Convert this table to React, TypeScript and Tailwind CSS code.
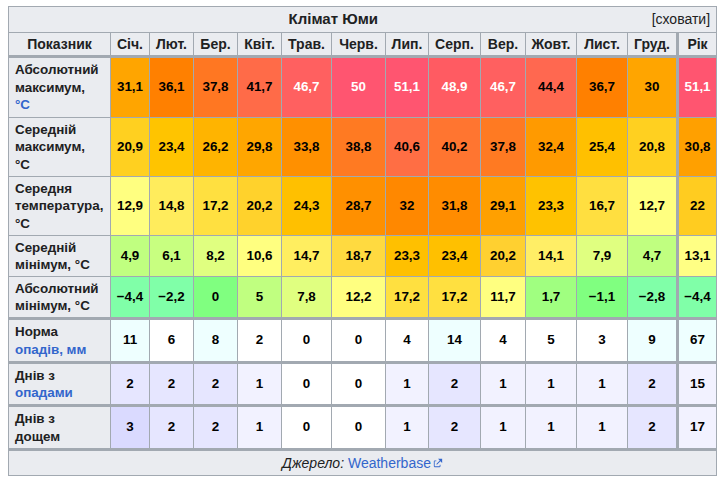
const months = ["Січ.", "Лют.", "Бер.", "Квіт.", "Трав.", "Черв.", "Лип.", "Серп.", "Вер.", "Жовт.", "Лист.", "Груд.", "Рік"]

// column widths, measured border to border
const widths = [102, 39, 44, 44, 44, 50, 54, 43, 52, 45, 51, 51, 50, 39]

type Cell = [string, string, boolean?]

const link = "text-[#3366cc]"

const rows: { label: React.ReactNode; h: string; sep?: boolean; cells: Cell[] }[] = [
  {
    label: (
      <>
        Абсолютний
        <br />
        максимум,
        <br />
        <span className={link}>°C</span>
      </>
    ),
    h: "h-[61px]",
    sep: true,
    cells: [
      ["31,1", "#ffa500"],
      ["36,1", "#ff8000"],
      ["37,8", "#ff7722"],
      ["41,7", "#ff6b48"],
      ["46,7", "#ff6060", true],
      ["50", "#ff5570", true],
      ["51,1", "#ff5570", true],
      ["48,9", "#ff5b62", true],
      ["46,7", "#ff6060", true],
      ["44,4", "#ff6850"],
      ["36,7", "#ff8000"],
      ["30", "#ffa500"],
      ["51,1", "#ff5570", true],
    ],
  },
  {
    label: (
      <>
        Середній
        <br />
        максимум,
        <br />
        °C
      </>
    ),
    h: "h-[59px]",
    cells: [
      ["20,9", "#ffd020"],
      ["23,4", "#ffc400"],
      ["26,2", "#ffb400"],
      ["29,8", "#ffa600"],
      ["33,8", "#ff9000"],
      ["38,8", "#ff7a22"],
      ["40,6", "#ff6e44"],
      ["40,2", "#ff7530"],
      ["37,8", "#ff7a22"],
      ["32,4", "#ff9a00"],
      ["25,4", "#ffc000"],
      ["20,8", "#ffd020"],
      ["30,8", "#ffa000"],
    ],
  },
  {
    label: (
      <>
        Середня
        <br />
        температура,
        <br />
        °C
      </>
    ),
    h: "h-[59px]",
    cells: [
      ["12,9", "#ffff80"],
      ["14,8", "#ffec5c"],
      ["17,2", "#ffe040"],
      ["20,2", "#ffd22c"],
      ["24,3", "#ffc000"],
      ["28,7", "#ff9000"],
      ["32", "#ff8800"],
      ["31,8", "#ff8c00"],
      ["29,1", "#ffa000"],
      ["23,3", "#ffc200"],
      ["16,7", "#ffdf40"],
      ["12,7", "#ffff80"],
      ["22", "#ffcc20"],
    ],
  },
  {
    label: (
      <>
        Середній
        <br />
        мінімум, °C
      </>
    ),
    h: "h-[41px]",
    cells: [
      ["4,9", "#c0ff80"],
      ["6,1", "#c8ff80"],
      ["8,2", "#e0ff80"],
      ["10,6", "#ffff80"],
      ["14,7", "#ffee60"],
      ["18,7", "#ffda40"],
      ["23,3", "#ffc000"],
      ["23,4", "#ffc000"],
      ["20,2", "#ffd030"],
      ["14,1", "#ffee66"],
      ["7,9", "#e0ff80"],
      ["4,7", "#c0ff80"],
      ["13,1", "#ffff84"],
    ],
  },
  {
    label: (
      <>
        Абсолютний
        <br />
        мінімум, °C
      </>
    ),
    h: "h-[42px]",
    cells: [
      ["−4,4", "#80ffa8"],
      ["−2,2", "#80ffa8"],
      ["0", "#80ff80"],
      ["5", "#c0ff80"],
      ["7,8", "#e0ff80"],
      ["12,2", "#ffff80"],
      ["17,2", "#ffe040"],
      ["17,2", "#ffe040"],
      ["11,7", "#ffff80"],
      ["1,7", "#a0ff80"],
      ["−1,1", "#80ff80"],
      ["−2,8", "#80ffa8"],
      ["−4,4", "#80ffa8"],
    ],
  },
  {
    label: (
      <>
        Норма
        <br />
        <span className={link}>опадів, мм</span>
      </>
    ),
    h: "h-[44px]",
    sep: true,
    cells: [
      ["11", "#eeffff"],
      ["6", "#ffffff"],
      ["8", "#eeffff"],
      ["2", "#ffffff"],
      ["0", "#ffffff"],
      ["0", "#ffffff"],
      ["4", "#ffffff"],
      ["14", "#eeffff"],
      ["4", "#ffffff"],
      ["5", "#ffffff"],
      ["3", "#ffffff"],
      ["9", "#eeffff"],
      ["67", "#eeffff"],
    ],
  },
  {
    label: (
      <>
        Днів з
        <br />
        <span className={link}>опадами</span>
      </>
    ),
    h: "h-[43px]",
    sep: true,
    cells: [
      ["2", "#e6e6ff"],
      ["2", "#e6e6ff"],
      ["2", "#e6e6ff"],
      ["1", "#f2f2ff"],
      ["0", "#ffffff"],
      ["0", "#ffffff"],
      ["1", "#f2f2ff"],
      ["2", "#e6e6ff"],
      ["1", "#f2f2ff"],
      ["1", "#f2f2ff"],
      ["1", "#f2f2ff"],
      ["2", "#e6e6ff"],
      ["15", "#f2f2ff"],
    ],
  },
  {
    label: (
      <>
        Днів з
        <br />
        дощем
      </>
    ),
    h: "h-[44px]",
    sep: true,
    cells: [
      ["3", "#dadaff"],
      ["2", "#e6e6ff"],
      ["2", "#e6e6ff"],
      ["1", "#f2f2ff"],
      ["0", "#ffffff"],
      ["0", "#ffffff"],
      ["1", "#f2f2ff"],
      ["2", "#e6e6ff"],
      ["1", "#f2f2ff"],
      ["1", "#f2f2ff"],
      ["1", "#f2f2ff"],
      ["2", "#e6e6ff"],
      ["17", "#f2f2ff"],
    ],
  },
]

function ExternalIcon() {
  return (
    <svg width="10" height="10" viewBox="0 0 12 12" className="inline-block ml-[2px] align-[0px]" fill="currentColor">
      <path d="M6 1h5v5L8.86 3.85 4.7 8 4 7.3l4.15-4.16zM2 3h2v1H2v6h6V8h1v2a1 1 0 0 1-1 1H2a1 1 0 0 1-1-1V4a1 1 0 0 1 1-1" />
    </svg>
  )
}

export default function App() {
  const b = "border border-[#a2a9b1]"
  return (
    <div className="bg-white min-h-[484px] pt-[6px] pl-[8px] font-['Liberation_Sans',Arial,sans-serif] text-[#202122]">
      <table className="w-[709px] table-fixed border-collapse border border-[#a2a9b1]">
        <colgroup>
          {widths.map((w, i) => (
            <col key={i} style={{ width: w }} />
          ))}
        </colgroup>
        <thead>
          {/* title */}
          <tr className="h-[26px]">
            <th colSpan={14} className={`${b} bg-[#eaecf0] px-[6px] p-0`}>
              <div className="flex items-center">
                <span className="flex-1 text-center text-[15px] font-bold">Клімат Юми</span>
                <span className="text-[14px] font-normal">[сховати]</span>
              </div>
            </th>
          </tr>
          {/* months */}
          <tr className="h-[24px]">
            <th className={`${b} bg-[#eaecf0] text-[14px] font-bold p-0`}>Показник</th>
            {months.map((m, i) => (
              <th
                key={m}
                className={`${b} bg-[#eaecf0] text-[14px] font-bold p-0 ${i === 12 ? "border-l-[3px]" : ""}`}
              >
                {m}
              </th>
            ))}
          </tr>
        </thead>
        <tbody>
          {rows.map((r, ri) => (
            <tr key={ri} className={r.h}>
              <th
                className={`${b} bg-[#eaecf0] text-left text-[13.4px] leading-[17.5px] font-bold whitespace-nowrap px-[6px] py-0 ${r.sep ? "border-t-[3px]" : ""}`}
              >
                {r.label}
              </th>
              {r.cells.map(([v, bg, white], ci) => (
                <td
                  key={ci}
                  style={{ backgroundColor: bg }}
                  className={`${b} text-center text-[13.4px] font-bold p-0 ${white ? "text-white" : "text-black"} ${r.sep ? "border-t-[3px]" : ""} ${ci === 12 ? "border-l-[3px]" : ""}`}
                >
                  {v}
                </td>
              ))}
            </tr>
          ))}
          {/* source */}
          <tr className="h-[26px]">
            <td colSpan={14} className={`${b} border-t-[3px] bg-[#eaecf0] text-center text-[14px] p-0`}>
              <i>Джерело:</i> <span className={link}>Weatherbase</span>
              <span className={link}>
                <ExternalIcon />
              </span>
            </td>
          </tr>
        </tbody>
      </table>
    </div>
  )
}
